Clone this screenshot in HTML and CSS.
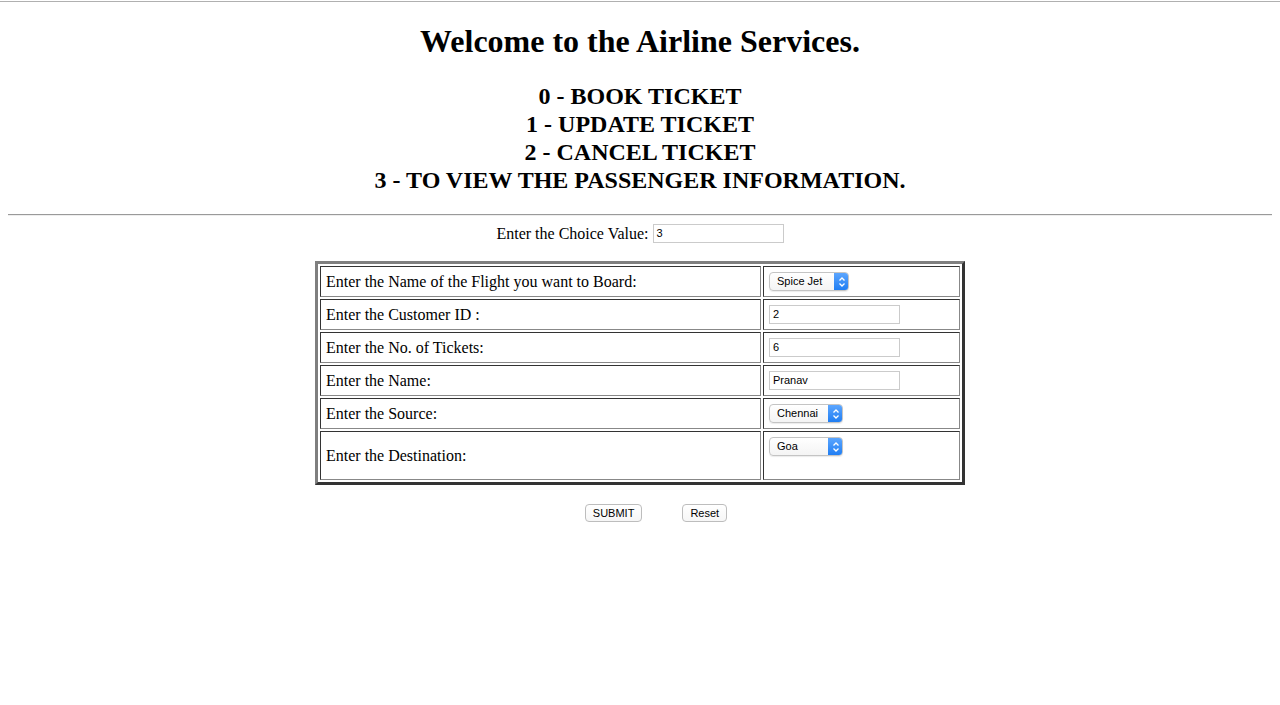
FILE: index.html
```html
<!DOCTYPE html>
<html>
<head>
<meta charset="utf-8">
<title>Airline Services</title>
<link rel="stylesheet" href="styles.css">
</head>
<body>
<div class="topline"></div>
<h1 class="title">Welcome to the Airline Services.</h1>
<h2 class="menu">0 - BOOK TICKET<br>1 - UPDATE TICKET<br>2 - CANCEL TICKET<br>3 - TO VIEW THE PASSENGER INFORMATION.</h2>
<hr class="rule">
<form class="form">
  <div class="choice">Enter the Choice Value: <span class="field">3</span></div>
  <table class="grid">
    <tr>
      <td class="label">Enter the Name of the Flight you want to Board:</td>
      <td class="ctl"><span class="select w80"><span class="sel-text">Spice Jet</span><span class="arrow"><svg width="8" height="12" viewBox="0 0 8 12"><path d="M1.5 4.5 L4 2 L6.5 4.5 M1.5 7.5 L4 10 L6.5 7.5" fill="none" stroke="#fff" stroke-width="1.3"/></svg></span></span></td>
    </tr>
    <tr>
      <td class="label">Enter the Customer ID :</td>
      <td class="ctl"><span class="field">2</span></td>
    </tr>
    <tr>
      <td class="label">Enter the No. of Tickets:</td>
      <td class="ctl"><span class="field">6</span></td>
    </tr>
    <tr>
      <td class="label">Enter the Name:</td>
      <td class="ctl"><span class="field">Pranav</span></td>
    </tr>
    <tr>
      <td class="label">Enter the Source:</td>
      <td class="ctl"><span class="select w74"><span class="sel-text">Chennai</span><span class="arrow"><svg width="8" height="12" viewBox="0 0 8 12"><path d="M1.5 4.5 L4 2 L6.5 4.5 M1.5 7.5 L4 10 L6.5 7.5" fill="none" stroke="#fff" stroke-width="1.3"/></svg></span></span></td>
    </tr>
    <tr>
      <td class="label">Enter the Destination:</td>
      <td class="ctl top"><div class="tall"><span class="select w74"><span class="sel-text">Goa</span><span class="arrow"><svg width="8" height="12" viewBox="0 0 8 12"><path d="M1.5 4.5 L4 2 L6.5 4.5 M1.5 7.5 L4 10 L6.5 7.5" fill="none" stroke="#fff" stroke-width="1.3"/></svg></span></span></div></td>
    </tr>
  </table>
  <div class="buttons">
    <span class="btn">SUBMIT</span>
    <span class="btn">Reset</span>
  </div>
</form>
</body>
</html>
```

FILE: styles.css
```css
html, body {
  margin: 0;
  padding: 0;
  background: #fff;
  color: #000;
  font-family: "Liberation Serif", "Times New Roman", serif;
  font-size: 16px;
}

.topline {
  margin-top: 1px;
  height: 0;
  border-top: 1px solid #b0b0b0;
}

.title {
  margin: 21px 0 0;
  font-size: 32px;
  line-height: 37px;
  font-weight: bold;
  text-align: center;
}

.menu {
  margin: 22px 0 0;
  font-size: 24px;
  line-height: 28px;
  font-weight: bold;
  text-align: center;
}

.rule {
  margin: 20px 8px 0;
  height: 0;
  border: 0;
  border-top: 1px solid #9a9a9a;
  border-bottom: 1px solid #eeeeee;
}

.form {
  margin: 0;
}

.choice {
  margin-top: 8px;
  text-align: center;
  line-height: 19px;
  height: 19px;
}

.field {
  display: inline-block;
  box-sizing: border-box;
  width: 131px;
  height: 19px;
  border: 1px solid #cbcbcb;
  padding: 0 3px;
  font-family: "Liberation Sans", Arial, sans-serif;
  font-size: 11px;
  line-height: 17px;
  text-align: left;
  vertical-align: top;
  background: #fff;
}

.grid {
  margin: 18px auto 0;
  width: 650px;
  border-collapse: separate;
  border-spacing: 2px;
  border-style: solid;
  border-width: 3px;
  border-color: #7f7f7f #333333 #333333 #7f7f7f;
  table-layout: fixed;
}

.grid td {
  border: 1px solid;
  border-color: #333333 #888888 #888888 #333333;
  padding: 5px;
  line-height: 19px;
  height: 19px;
  vertical-align: middle;
}

.label {
  width: 429px;
}

.ctl.top {
  vertical-align: top;
}

.tall {
  height: 37px;
}

.select {
  display: inline-flex;
  box-sizing: border-box;
  height: 19px;
  border: 1px solid #c4c4c4;
  border-radius: 4px;
  background: linear-gradient(#ffffff, #f4f4f4);
  box-shadow: 0 1px 1px rgba(0, 0, 0, 0.08);
  overflow: hidden;
  vertical-align: top;
  font-family: "Liberation Sans", Arial, sans-serif;
  font-size: 11px;
  line-height: 17px;
}

.w80 { width: 80px; }
.w74 { width: 74px; }

.sel-text {
  flex: 1;
  padding-left: 7px;
  white-space: nowrap;
}

.arrow {
  width: 15px;
  margin: -1px -1px -1px 0;
  background: linear-gradient(#5fa8ff, #1d7cf2);
  border-radius: 0 4px 4px 0;
  display: flex;
  align-items: center;
  justify-content: center;
}

.buttons {
  margin-top: 19px;
  padding-left: 32px;
  display: flex;
  justify-content: center;
  gap: 40px;
}

.btn {
  display: inline-block;
  box-sizing: border-box;
  height: 18px;
  padding: 0 7px;
  border: 1px solid #bdbdbd;
  border-radius: 4px;
  background: linear-gradient(#ffffff, #f6f6f6);
  font-family: "Liberation Sans", Arial, sans-serif;
  font-size: 11px;
  line-height: 16px;
  text-align: center;
}
```
